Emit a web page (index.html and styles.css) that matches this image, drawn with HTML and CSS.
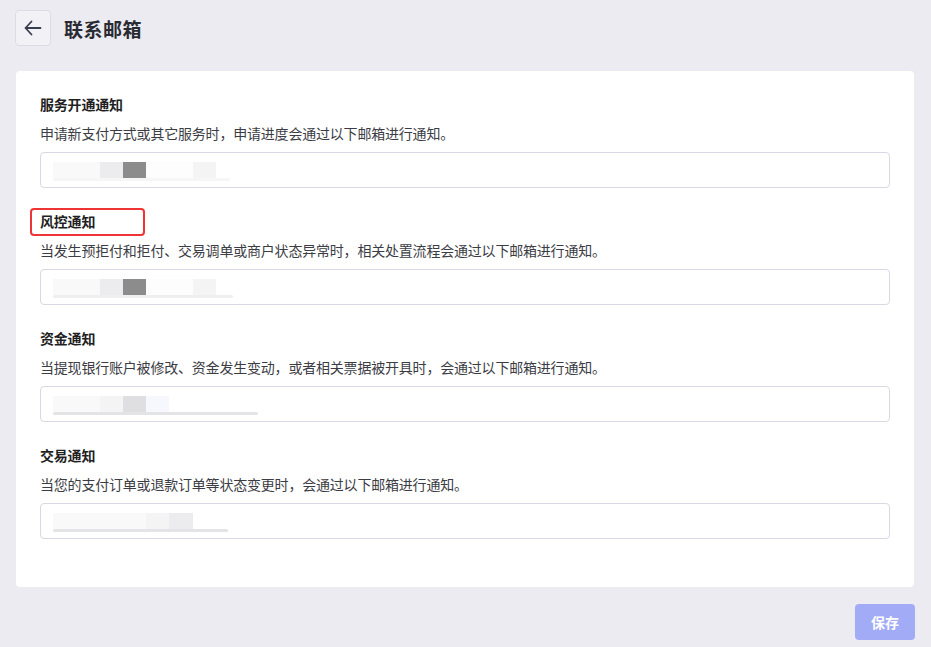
FILE: index.html
```html
<!DOCTYPE html>
<html lang="zh">
<head>
<meta charset="utf-8">
<link rel="stylesheet" href="styles.css">
</head>
<body>
<div class="page">
  <header class="header">
    <button class="back" aria-label="返回">
      <svg width="18" height="18" viewBox="0 0 18 18" fill="none" stroke="#3b3e4f" stroke-width="1.8" stroke-linecap="round" stroke-linejoin="round"><path d="M16.5 9H1.5M7.5 2.5L1.5 9l6 6.5"/></svg>
    </button>
    <h1 class="title">联系邮箱</h1>
  </header>

  <main class="card">
    <section class="field">
      <div class="label">服务开通通知</div>
      <p class="desc">申请新支付方式或其它服务时，申请进度会通过以下邮箱进行通知。</p>
      <div class="input">
        <div class="redact r1">
          <span class="b b-a" style="width:47px"></span><span class="b b-l" style="width:23px"></span><span class="b b-d" style="width:23px"></span><span class="b" style="width:47px"></span><span class="b b-f" style="width:23px"></span>
        </div>
      </div>
    </section>

    <section class="field">
      <div class="label marked"><span>风控通知</span><span class="mark"></span></div>
      <p class="desc">当发生预拒付和拒付、交易调单或商户状态异常时，相关处置流程会通过以下邮箱进行通知。</p>
      <div class="input">
        <div class="redact r2">
          <span class="b b-a" style="width:47px"></span><span class="b b-l" style="width:23px"></span><span class="b b-d" style="width:23px"></span><span class="b" style="width:47px"></span><span class="b b-f" style="width:23px"></span>
        </div>
      </div>
    </section>

    <section class="field">
      <div class="label">资金通知</div>
      <p class="desc">当提现银行账户被修改、资金发生变动，或者相关票据被开具时，会通过以下邮箱进行通知。</p>
      <div class="input">
        <div class="redact r3">
          <span class="b b-a" style="width:47px"></span><span class="b b-f" style="width:23px"></span><span class="b b-m" style="width:23px"></span><span class="b b-b" style="width:23px"></span>
        </div>
      </div>
    </section>

    <section class="field">
      <div class="label">交易通知</div>
      <p class="desc">当您的支付订单或退款订单等状态变更时，会通过以下邮箱进行通知。</p>
      <div class="input">
        <div class="redact r4">
          <span class="b b-a" style="width:93px"></span><span class="b b-f" style="width:23px"></span><span class="b b-l" style="width:24px"></span>
        </div>
      </div>
    </section>
  </main>

  <footer class="footer">
    <button class="save">保存</button>
  </footer>
</div>
</body>
</html>
```

FILE: styles.css
```css
* { box-sizing: border-box; }
html, body { margin: 0; padding: 0; }
body {
  background: #ebebf1;
  font-family: "Noto Sans CJK SC", "Noto Sans", sans-serif;
  color: #333;
  width: 931px;
  height: 647px;
  overflow: hidden;
}
.page { padding: 10px 16px 0 16px; }
.header {
  display: flex;
  align-items: center;
  gap: 13px;
  margin-left: -1px;
  height: 36px;
}
.back {
  width: 36px;
  height: 36px;
  border: 1px solid #dcdce4;
  border-radius: 4px;
  background: #f2f2f6;
  display: flex;
  align-items: center;
  justify-content: center;
  padding: 0;
}
.title {
  margin: 0;
  font-size: 19px;
  font-weight: 700;
  color: #2a2a33;
  letter-spacing: 0.5px;
}
.card {
  margin-top: 25px;
  background: #fff;
  border-radius: 4px;
  width: 898px;
  height: 516px;
  padding: 23px 24px 0 24px;
}
.field { margin-bottom: 23px; }
.label {
  font-size: 14px;
  line-height: 20px;
  font-weight: 700;
  color: #1f1f24;
  letter-spacing: -0.2px;
}
.marked { position: relative; }
.mark {
  position: absolute;
  left: -10px;
  top: -3px;
  width: 115px;
  height: 28px;
  border: 2px solid #ee3434;
  border-radius: 4px;
}
.desc {
  margin: 9px 0 9px;
  font-size: 14px;
  line-height: 20px;
  color: #3c3c44;
  letter-spacing: -0.2px;
}
.input {
  height: 36px;
  border: 1px solid #d9d8e4;
  border-radius: 4px;
  display: flex;
  align-items: center;
  padding-left: 12px;
}
.redact {
  display: flex;
  height: 16px;
  position: relative;
}
.redact::after {
  content: "";
  position: absolute;
  left: 0;
  bottom: -3px;
  height: 3px;
  border-radius: 2px;
  background: #f0f0f2;
}
.r1::after { width: 177px; background: #f6f6f7; }
.r2::after { width: 180px; background: #efeff1; }
.r3::after { width: 205px; background: #e4e4e6; }
.r4::after { width: 175px; background: #e4e4e6; }
.b { display: block; height: 16px; background: #fdfdfd; }
.b-a { background: #f9f9f9; }
.b-l { background: #ececee; }
.b-d { background: #8c8c8c; }
.b-f { background: #f4f4f4; }
.b-m { background: #dfdfe1; }
.b-b { background: #f7f8fd; }
.footer {
  display: flex;
  justify-content: flex-end;
  margin-top: 17px;
  padding-right: 0;
}
.save {
  width: 60px;
  height: 36px;
  border: none;
  border-radius: 4px;
  background: #a2abf6;
  color: #fff;
  font-family: "Noto Sans CJK SC", sans-serif;
  font-size: 14px;
  font-weight: 700;
  padding: 0;
}
```
